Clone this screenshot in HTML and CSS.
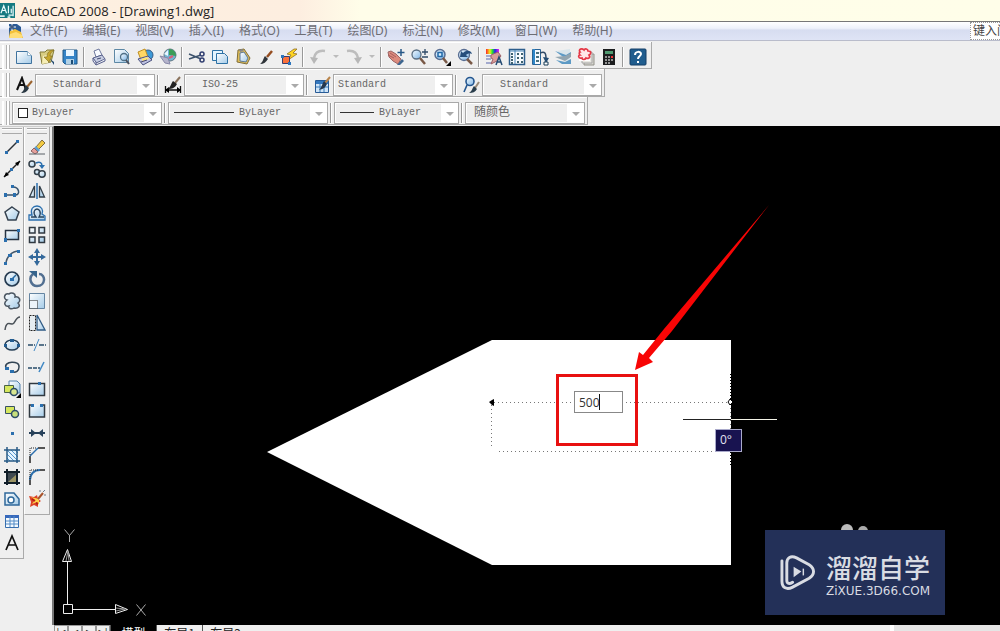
FILE: index.html
```html
<!DOCTYPE html>
<html lang="zh-CN">
<head>
<meta charset="utf-8">
<title>AutoCAD 2008 - [Drawing1.dwg]</title>
<link rel="stylesheet" href="styles.css">
</head>
<body>
<svg class="defs" aria-hidden="true">
  <defs>
    <linearGradient id="ice" x1="0" y1="0" x2="1" y2="1"><stop offset="0" stop-color="#fff"/><stop offset="1" stop-color="#a4cbe8"/></linearGradient>
    <linearGradient id="lens" x1="0" y1="0" x2="1" y2="1"><stop offset="0" stop-color="#f5fbff"/><stop offset="1" stop-color="#7fb6e6"/></linearGradient>
    <linearGradient id="rainbow"><stop offset="0" stop-color="#f22"/><stop offset=".3" stop-color="#ee2"/><stop offset=".5" stop-color="#2d3"/><stop offset=".7" stop-color="#22e"/><stop offset="1" stop-color="#e2e"/></linearGradient>
  </defs>
</svg>

<header class="titlebar">
  <svg class="app-icon" viewBox="0 0 16 16"><rect width="16" height="16" fill="#167a80"/><path d="m1 11 3-8 3 8M2 8h4M9 3v8M12 6v5M14 3v11M9 13h5" stroke="#eafafa" stroke-width="1.300" fill="none"/><path d="M0 14h5M8 15h3" stroke="#d5eeee" stroke-width="2"/></svg>
  <h1>AutoCAD 2008 - [Drawing1.dwg]</h1>
</header>

<nav class="menubar">
  <svg class="doc-icon" viewBox="0 0 16 16"><path d="M2 1h8l4 3v10H2z" fill="#2c5b96"/><path d="m3 8 5-2 6 3 2 6H2z" fill="#f3c13b"/><path d="m3 11 6-2 6 3v3H2z" fill="#ffdd77"/><path d="M5 0v8M1 4h8" stroke="#fff"/><path d="M5 2v4M3 4h4" stroke="#163460"/></svg>
  <button>文件(F)</button><button>编辑(E)</button><button>视图(V)</button><button>插入(I)</button><button>格式(O)</button><button>工具(T)</button><button>绘图(D)</button><button>标注(N)</button><button>修改(M)</button><button>窗口(W)</button><button>帮助(H)</button>
  <input class="ask" type="text" aria-label="键入问题" value="键入问题">
</nav>

<section class="toolbars">
  <div class="toolbar">
    <span class="grip"></span>
    <button class="tool" aria-label="新建"><svg viewBox="0 0 18 18"><path d="M1.500 3.500h11l4 4v8h-15z" fill="url(#ice)" stroke="#3f739f"/><path d="M12.500 3.500v4h4" fill="#fff" stroke="#8fb2cb"/></svg></button>
    <button class="tool" aria-label="打开"><svg viewBox="0 0 18 18"><path d="M2 4h5l2-2h7l-3 12-9 2z" fill="#d8cd83" stroke="#837b38"/><path d="m5 8 7-2-2 9-6 1z" fill="#f6eeb6"/><path d="M16 2c-5 0-7 3-7 7H6l5 5 3-6h-2c0-2 1-4 4-6z" fill="#c7a72d" stroke="#806b22" stroke-width=".6"/><path d="m12 11 4 3v3z" fill="#244c72"/></svg></button>
    <button class="tool" aria-label="保存"><svg viewBox="0 0 18 18"><path d="M2 2h14v14H4l-2-2z" fill="#3584c7" stroke="#205886"/><path d="M5 2h8v6H5z" fill="#e9f6ff"/><path d="M5 11h8v5H5z" fill="#b3d2e6"/><path d="M10 12h2v4h-2z" fill="#1d4c74"/></svg></button>
    <span class="sep"></span>
    <button class="tool" aria-label="打印"><svg viewBox="0 0 18 18"><path d="m4 3 5-2 3 6-6 2z" fill="#f7faff" stroke="#6f799d"/><path d="m3 10 9-3 3 4-9 4z" fill="#c6cde2" stroke="#58618c"/><path d="M3 10v3l3 4v-3zM6 17l9-4v-2" fill="#e9ecf5" stroke="#58618c"/><path d="m7 11 4-1" stroke="#424a72"/></svg></button>
    <button class="tool" aria-label="打印预览"><svg viewBox="0 0 18 18"><path d="M1.500 1.500h10l4 4v9h-14z" fill="url(#ice)" stroke="#5d88a5"/><circle cx="11" cy="9" r="3.500" fill="url(#lens)" stroke="#527187" stroke-width="1.300"/><path d="m13 12 3 4" stroke="#4d535f" stroke-width="2"/></svg></button>
    <button class="tool" aria-label="发布"><svg viewBox="0 0 18 18"><circle cx="12" cy="7" r="5" fill="#3e9ad7" stroke="#365d86"/><path d="m2 4 7-3 3 8-7 3z" fill="#ffd764" stroke="#be8e22"/><path d="m2 11 10-3 4 4-9 5z" fill="#bdc2e1" stroke="#4e5582"/><path d="m5 11 6-2 2 2-6 2z" fill="#ffe374"/><path d="m5 14 6-2" stroke="#49476b"/></svg></button>
    <button class="tool" aria-label="三维 DWF"><svg viewBox="0 0 18 18"><circle cx="11" cy="7" r="6" fill="#72b4d4" stroke="#617683"/><path d="M10 1c4 0 7 3 7 7l-7-1z" fill="#3a9d56"/><path d="M9 2 5 6l4 2z" fill="#e9f7ff"/><path d="m1 8 8 2 2 6-5-1z" fill="#b5b4cc" stroke="#8788a8"/><path d="m10 10 4-2" stroke="#d95e79" stroke-width="2"/></svg></button>
    <span class="sep"></span>
    <button class="tool" aria-label="剪切"><svg viewBox="0 0 18 18"><path d="m1 6 12 5M1 11l12-4" stroke="#3c526c" stroke-width="1.500"/><circle cx="14" cy="6" r="2" fill="none" stroke="#303e70" stroke-width="1.500"/><circle cx="14" cy="12" r="2" fill="none" stroke="#303e70" stroke-width="1.500"/></svg></button>
    <button class="tool" aria-label="复制"><svg viewBox="0 0 18 18"><path d="M1.500 2.500h10v10h-10z" fill="#e4f5ff" stroke="#2e72a5"/><path d="M5.500 5.500h8l3 3v7h-11z" fill="url(#ice)" stroke="#2e72a5"/></svg></button>
    <button class="tool" aria-label="粘贴"><svg viewBox="0 0 18 18"><path d="m4 2 6-1 6 9-3 6-10-2z" fill="#e2bf57" stroke="#806e39"/><path d="m6 5 4-1 4 6-2 4-6-1z" fill="url(#ice)" stroke="#5a7899"/><path d="m5 2 3-1 2 2-4 1z" fill="#86888b"/></svg></button>
    <button class="tool" aria-label="特性匹配"><svg viewBox="0 0 18 18"><path d="m10 9 5-6" stroke="#954d20" stroke-width="2.500"/><path d="m8 8 3 3c-2 3-4 5-8 5 3-2 3-5 5-8z" fill="#2f3439"/></svg></button>
    <button class="tool" aria-label="块编辑器"><svg viewBox="0 0 18 18"><path d="M14 1 7 6l4 1-3 5 9-6-4-1 4-4z" fill="#ffd522" stroke="#91702a" stroke-width=".8"/><path d="M2.500 8.500h7v7h-7z" fill="#fb713b" stroke="#393d6c"/><path d="M1 7h3v3H1zM8 14h3v3H8z" fill="#2c75bc"/></svg></button>
    <span class="sep"></span>
    <button class="tool" aria-label="放弃"><svg viewBox="0 0 18 18"><path d="M16 3C9 2 6 5 5 10" fill="none" stroke="#bdbdbd" stroke-width="2.500"/><path d="m1 9 8 1-4 6z" fill="#b7b7b7"/></svg></button>
    <button class="drop" aria-label="放弃列表"></button>
    <button class="tool" aria-label="重做"><svg viewBox="0 0 18 18"><path d="M2 3c7-1 10 2 11 7" fill="none" stroke="#bdbdbd" stroke-width="2.500"/><path d="m17 9-8 1 4 6z" fill="#b7b7b7"/></svg></button>
    <button class="drop" aria-label="重做列表"></button>
    <span class="sep"></span>
    <button class="tool" aria-label="平移"><svg viewBox="0 0 18 18"><path d="m1 4 3-1 5 3 5 5-3 5-5-3-4-4z" fill="#dc8b7d" stroke="#9c6667"/><path d="m1 7 6 3M3 5l6 4" stroke="#a75e5d"/><path d="m10 17 5-6 2 2-4 4z" fill="#3d658e"/><path d="M14 1v7M10.500 4.500h7" stroke="#285887" stroke-width="1.500"/></svg></button>
    <button class="tool" aria-label="实时缩放"><svg viewBox="0 0 18 18"><circle cx="6.500" cy="6.500" r="4.500" fill="url(#lens)" stroke="#596e82" stroke-width="1.300"/><path d="m10 10 5 6" stroke="#795947" stroke-width="2.500"/><path d="M12 4h6M15 1v6M12 9h6" stroke="#314b68" stroke-width="1.300"/></svg></button>
    <button class="tool" aria-label="窗口缩放"><svg viewBox="0 0 18 18"><circle cx="7" cy="6.500" r="5" fill="url(#lens)" stroke="#596e92" stroke-width="1.500"/><path d="M5 4.500h4v4H5z" fill="#d9efff" stroke="#2168a6" stroke-width="1.500"/><path d="m10 10 4 5" stroke="#795947" stroke-width="2.500"/><path d="M18 13v5h-5z"/></svg></button>
    <button class="tool" aria-label="缩放上一个"><svg viewBox="0 0 18 18"><circle cx="8" cy="7" r="5.500" fill="url(#lens)" stroke="#596e92" stroke-width="1.300"/><path d="m11 11 5 5" stroke="#795947" stroke-width="2.500"/><path d="m4 9 1-6 2 2c3-3 8-3 9 1-3-1-5 0-6 1l2 2z" fill="#254e7c"/></svg></button>
    <span class="sep"></span>
    <button class="tool" aria-label="特性"><svg viewBox="0 0 18 18"><path d="M1 1h13v5H1z" fill="url(#rainbow)"/><path d="M1 8h6M1 11h5M1 15h5" stroke="#8a94c4" stroke-width="1.500"/><path d="m6 7 7-3 3 4-4 5-6 3 2-5-2-1z" fill="#db9c98" stroke="#9b6269"/><path d="m11 17 3-8 3 8M12 14h4" fill="none" stroke="#244a72" stroke-width="1.500"/></svg></button>
    <button class="tool" aria-label="设计中心"><svg viewBox="0 0 18 18"><path d="M1.500 1.500h15v15h-15z" fill="#f9fcff" stroke="#2d5e8c" stroke-width="1.500"/><path d="M2 3h14M7 2v14" stroke="#4c88b9"/><path d="M3 6h2M3 9h2M3 12h2M3 15h2M9 6h2M13 6h2M9 10h2M13 10h2M9 14h2M13 14h2" stroke="#3e6271" stroke-width="2"/></svg></button>
    <button class="tool" aria-label="工具选项板"><svg viewBox="0 0 18 18"><path d="M1.500 1.500h8v15h-8z" fill="#f5faff" stroke="#2a6496"/><path d="M3 1v15" stroke="#2e87c9" stroke-width="2"/><path d="M5 5h3M5 9h3M5 13h3" stroke="#49717f" stroke-width="2"/><path d="M9 5c5-2 6 0 6 6" fill="none" stroke="#314b68" stroke-width="1.500"/><path d="m12 9 6 1-3 5z" fill="#234c73"/><path d="M13 14h4v3h-4z" fill="#fff" stroke="#173a55"/></svg></button>
    <button class="tool" aria-label="图纸集管理器"><svg viewBox="0 0 18 18"><path d="M3 3 16 1v11l-4 4z" fill="#d9e5eb"/><path d="m1 3 11 4 5-3v4l-5 3zM2 12l9 2 6-3v5H8z" fill="#5d9ac5"/><path d="m1 9 10-1 6-3v4l-6 4z" fill="#92a5b0"/></svg></button>
    <button class="tool" aria-label="标记集管理器"><svg viewBox="0 0 18 18"><path d="M7 6h10v11H7z" fill="#d6d5cf" stroke="#93928a"/><path d="M5 4h10v11H5z" fill="#e9e8e2" stroke="#a5a5a5"/><path d="M2 2h11v11H2z" fill="#fff"/><path d="M3 4c-2-3 2-4 4-2 1-2 4-1 4 1 4 0 3 3 1 4 2 3-1 4-3 3-1 2-4 2-4 0-4 1-4-3-2-3-1-1-1-3 0-3z" fill="#ffe8e8" stroke="#e53745" stroke-width="1.700"/></svg></button>
    <button class="tool" aria-label="快速计算器"><svg viewBox="0 0 18 18"><path d="M3 1h12v16H3z" fill="#1b1d1e"/><path d="M5 3h8v3H5z" fill="#4f9a70"/><path d="M5 9h2M8 9h2M11 9h2M5 12h2M8 12h2M11 12h2M5 15h2M8 15h2" stroke="#bbb" stroke-width="1.300"/><path d="M11 8h2v2h-2z" fill="#e33"/></svg></button>
    <span class="sep"></span>
    <button class="tool" aria-label="帮助"><svg viewBox="0 0 18 18"><rect x="1" y="1" width="16" height="16" rx="1" fill="#205d8e" stroke="#143f66"/><path d="M6 7c0-4 6-4 6-1 0 2-3 2-3 5M9 13v2" fill="none" stroke="#fff" stroke-width="2"/></svg></button>
  </div>

  <div class="toolbar">
    <span class="grip"></span>
    <button class="tool" aria-label="文字样式"><svg viewBox="0 0 18 18"><path d="m2 14 5-12 4 12M4 9h6" fill="none" stroke="#111" stroke-width="2"/><path d="m12 11 5-6" stroke="#9b632e" stroke-width="2"/><path d="m11 9 3 3c-2 4-4 5-8 5 3-2 3-5 5-8z" fill="#293742"/></svg></button>
    <label class="combo pad-wide"><select aria-label="文字样式"><option>Standard</option></select></label>
    <span class="sep"></span>
    <button class="tool" aria-label="标注样式"><svg viewBox="0 0 18 18"><path d="M1.500 10v7M16.500 10v7M2 14h14" stroke="#111" stroke-width="1.300"/><path d="m1 14 4-3v6zM17 14l-4-3v6z"/><path d="m11 7 5-6" stroke="#8a735d" stroke-width="2"/><path d="m9 5 4 3c-2 4-5 5-9 5 3-3 3-5 5-8z" fill="#222"/></svg></button>
    <label class="combo pad-wide"><select aria-label="标注样式"><option>ISO-25</option></select></label>
    <span class="sep"></span>
    <button class="tool" aria-label="表格样式"><svg viewBox="0 0 18 18"><path d="M2.500 4.500h13v12h-13z" fill="#cfe4f7" stroke="#285b96"/><path d="M3 5h12v3H3z" fill="#3478bf"/><path d="M3 11h12M7 5v11M11 5v11" stroke="#377bbb"/><path d="m12 7 5-6" stroke="#b9854c" stroke-width="2"/><path d="m11 5 3 3c-2 4-4 5-8 6 3-3 3-6 5-9z" fill="#26384e"/></svg></button>
    <label class="combo pad-slim"><select aria-label="表格样式"><option>Standard</option></select></label>
    <span class="sep"></span>
    <button class="tool" aria-label="多重引线样式"><svg viewBox="0 0 18 18"><circle cx="8" cy="5.500" r="4" fill="url(#lens)" stroke="#24568f" stroke-width="1.600"/><path d="m5 9-3 7" stroke="#24568f" stroke-width="1.600"/><path d="m13 12 4-6" stroke="#9a8b79" stroke-width="2"/><path d="m12 10 3 3c-2 3-4 4-8 4 3-2 3-4 5-7z" fill="#2a3e4c"/></svg></button>
    <label class="combo pad-wide"><select aria-label="多重引线样式"><option>Standard</option></select></label>
  </div>

  <div class="toolbar">
    <span class="grip"></span>
    <label class="combo color"><span class="swatch"></span><select aria-label="颜色"><option>ByLayer</option></select></label>
    <span class="sep"></span>
    <label class="combo linetype"><span class="rule long"></span><select aria-label="线型"><option>ByLayer</option></select></label>
    <span class="sep"></span>
    <label class="combo weight"><span class="rule"></span><select aria-label="线宽"><option>ByLayer</option></select></label>
    <span class="sep"></span>
    <label class="combo plot"><select aria-label="打印样式"><option>随颜色</option></select></label>
  </div>
</section>

<main class="workspace">
  <aside class="palettes">
    <div class="palette draw">
      <span class="vgrip"></span>
      <button aria-label="直线"><svg viewBox="0 0 18 18"><path d="M3 15 15 3" stroke="#2a3138" stroke-width="1.500"/><path d="M2 13h3v3H2zM13 2h3v3h-3z" fill="#2b6fae"/></svg></button>
      <button aria-label="构造线"><svg viewBox="0 0 18 18"><path d="M1 17 17 1" stroke="#222" stroke-width="1.500"/><path d="m1 17 2-5 3 3zM17 1l-5 2 3 3z"/><path d="M7 8h3v3H7z" fill="#2b6fae"/></svg></button>
      <button aria-label="多段线"><svg viewBox="0 0 18 18"><path d="M2 13h10c6 0 4-8-2-8" fill="none" stroke="#37536e" stroke-width="1.500"/><path d="M1 11h3v4H1zM10 11h3v4h-3zM8 3h3v3H8z" fill="#2b6fae"/></svg></button>
      <button aria-label="正多边形"><svg viewBox="0 0 18 18"><path d="m9 3 7 5-3 8H5L2 8z" fill="url(#ice)" stroke="#354250" stroke-width="1.500"/></svg></button>
      <button aria-label="矩形"><svg viewBox="0 0 18 18"><path d="M2.500 4.500h13v9h-13z" fill="url(#ice)" stroke="#263342" stroke-width="1.500"/><path d="M1 12h3v4H1zM14 3h3v3h-3z" fill="#2b6fae"/></svg></button>
      <button aria-label="圆弧"><svg viewBox="0 0 18 18"><path d="M3 16C3 9 9 3 16 3" fill="none" stroke="#44586c" stroke-width="1.500"/><path d="M1 14h3v3H1zM5 6h4v3H5zM14 2h3v3h-3z" fill="#2b6fae"/></svg></button>
      <button aria-label="圆"><svg viewBox="0 0 18 18"><circle cx="9" cy="9" r="7" fill="url(#ice)" stroke="#253b51" stroke-width="1.700"/><path d="m9 9 4-4" stroke="#25689d" stroke-width="1.500"/><path d="M7 8h4v3H7z" fill="#2b6fae"/></svg></button>
      <button aria-label="修订云线"><svg viewBox="0 0 18 18"><path d="M4 8C0 7 1 1 6 2c2-2 7-1 6 3 5-1 6 4 3 6 3 3 0 6-4 5-3 2-6 0-5-2-4 1-6-3-2-6z" fill="url(#ice)" stroke="#4a5561" stroke-width="1.500"/></svg></button>
      <button aria-label="样条曲线"><svg viewBox="0 0 18 18"><path d="M2 16c1-8 4-7 7-6s3-7 8-7" fill="none" stroke="#495057" stroke-width="1.500"/></svg></button>
      <button aria-label="椭圆"><svg viewBox="0 0 18 18"><ellipse cx="9" cy="9" rx="7" ry="5" fill="url(#ice)" stroke="#263f56" stroke-width="1.500"/><path d="M1 8h3v3H1zM14 8h3v3h-3zM7 3h4v3H7z" fill="#235d91"/></svg></button>
      <button aria-label="椭圆弧"><svg viewBox="0 0 18 18"><path d="M3 10C0 3 17 2 16 9c0 4-3 6-7 5" fill="none" stroke="#324454" stroke-width="1.500"/><path d="M2 9h4v3H2zM7 12h4v3H7z" fill="#2b6fae"/></svg></button>
      <button aria-label="插入块"><svg viewBox="0 0 18 18"><path d="M6 1h8l3 3v9H6z" fill="url(#ice)" stroke="#5582ad"/><path d="M1.500 5.500h9v7h-9z" fill="#d5e75d" stroke="#496146"/><circle cx="11" cy="12" r="3.500" fill="#d8e690" stroke="#2c4c67" stroke-width="1.500"/><path d="M18 13v5h-5z"/></svg></button>
      <button aria-label="创建块"><svg viewBox="0 0 18 18"><path d="M2.500 4.500h9v7h-9z" fill="#d5e75d" stroke="#385064"/><circle cx="12" cy="12" r="3.500" fill="#c7df7c" stroke="#2c4c67" stroke-width="1.500"/></svg></button>
      <button aria-label="点"><svg viewBox="0 0 18 18"><path d="M8 8h3v3H8z" fill="#2b6fae"/></svg></button>
      <button aria-label="图案填充"><svg viewBox="0 0 18 18"><path d="M4 4h11v11H4z" fill="#e5f4ff"/><path d="m4 4 11 11M4 8l7 7M4 12l3 3M8 4l7 7M12 4l3 3" stroke="#5795cc"/><path d="M4 1v16M14 1v16M1 4h16M1 15h16" stroke="#275985" stroke-width="1.500"/></svg></button>
      <button aria-label="渐变色"><svg viewBox="0 0 18 18"><path d="M4 4h11v11H4z" fill="#3f4a52"/><path d="m5 14 9-8v8z" fill="#9b9464"/><path d="M4 1v16M14 1v16M1 4h16M1 15h16" stroke="#111e29" stroke-width="2"/></svg></button>
      <button aria-label="面域"><svg viewBox="0 0 18 18"><path d="M2 3h9l5 6v6H2z" fill="url(#ice)" stroke="#2f689a" stroke-width="1.500"/><circle cx="8" cy="10" r="3" fill="#fff" stroke="#2f689a" stroke-width="1.500"/></svg></button>
      <button aria-label="表格"><svg viewBox="0 0 18 18"><path d="M2.500 3.500h13v12h-13z" fill="#f4faff" stroke="#366eae"/><path d="M2 3h14v3H2z" fill="#3769bc"/><path d="M3 9h12M3 12h12M7 4v11M11 4v11" stroke="#538bc6"/></svg></button>
      <button aria-label="多行文字"><svg viewBox="0 0 18 18"><path d="M3 16 9 2l6 14M5 11h8" fill="none" stroke="#111" stroke-width="1.700"/></svg></button>
    </div>
    <div class="palette modify">
      <span class="vgrip"></span>
      <button aria-label="删除"><svg viewBox="0 0 18 18"><path d="m8 9 6-7 3 3-7 7z" fill="#f3ca42" stroke="#7f6d40"/><path d="m5 11 3-3 4 4-3 3z" fill="#5c9fcf"/><path d="m3 13 3-3 4 4-3 2z" fill="#e5a09b" stroke="#8c6262"/><path d="M1 16h16" stroke="#5b6067"/></svg></button>
      <button aria-label="复制对象"><svg viewBox="0 0 18 18"><circle cx="4" cy="4" r="3" fill="url(#ice)" stroke="#333f49" stroke-width="1.500"/><circle cx="9" cy="12" r="2.500" fill="url(#ice)" stroke="#333f49" stroke-width="1.500"/><circle cx="14" cy="14" r="3.200" fill="url(#ice)" stroke="#333f49" stroke-width="1.500"/><path d="M8 3c4-2 6 0 6 3" fill="none" stroke="#2b6fae" stroke-width="1.500"/><path d="M11 5h6l-3 4z" fill="#2b6fae"/></svg></button>
      <button aria-label="镜像"><svg viewBox="0 0 18 18"><path d="M6.500 4v11h-5zM11.500 4v11h5z" fill="url(#ice)" stroke="#333f49" stroke-width="1.300"/><path d="M9 1v16" stroke="#2b6fae" stroke-width="1.500"/></svg></button>
      <button aria-label="偏移"><svg viewBox="0 0 18 18"><path d="M1 16v-5h3C2 5 5 2 9 2s7 4 5 8l3 2v4z" fill="url(#ice)" stroke="#2b6fae" stroke-width="1.300"/><path d="M3 13h5c-4-5-1-8 1-8s5 3 2 8h5" fill="none" stroke="#26415b" stroke-width="1.300"/></svg></button>
      <button aria-label="阵列"><svg viewBox="0 0 18 18"><path d="M1.500 1.500h5.500V7H1.500zM11 1.500h5.500V7H11zM1.500 11h5.500v5.500H1.500zM11 11h5.500v5.500H11z" fill="url(#ice)" stroke="#303941" stroke-width="1.500"/></svg></button>
      <button aria-label="移动"><svg viewBox="0 0 18 18"><path d="M9 3v12M3 9h12" stroke="#34699b" stroke-width="2"/><path d="M9 0 6 5h6zM9 18l3-5H6zM0 9l5-3v6zM18 9l-5 3V6z" fill="#34699b"/></svg></button>
      <button aria-label="旋转"><svg viewBox="0 0 18 18"><path d="M5 4C0 8 3 16 9 16c9 0 9-12 2-12" fill="none" stroke="#526f91" stroke-width="2.500"/><path d="M1 1h8v7z" fill="#36648c"/></svg></button>
      <button aria-label="缩放"><svg viewBox="0 0 18 18"><path d="M1.500 1.500h15v15h-15z" fill="url(#ice)" stroke="#6585a2"/><path d="M1.500 8.500h8v8h-8z" fill="#edf5fb" stroke="#222" stroke-dasharray="1 1"/></svg></button>
      <button aria-label="拉伸"><svg viewBox="0 0 18 18"><path d="M9 1v15h8z" fill="url(#ice)" stroke="#2f5b85" stroke-width="1.300"/><path d="M1.500 1.500h6v15h-6z" fill="#e6edf1" stroke="#222" stroke-dasharray="2 1"/></svg></button>
      <button aria-label="修剪"><svg viewBox="0 0 18 18"><path d="M0 9h7M11 9h7" stroke="#294c69" stroke-width="1.500" stroke-dasharray="5 1"/><path d="m6 15 5-12" stroke="#4289c4"/></svg></button>
      <button aria-label="延伸"><svg viewBox="0 0 18 18"><path d="M0 10h12" stroke="#294c69" stroke-width="1.500" stroke-dasharray="4 1"/><path d="m11 14 5-10" stroke="#4289c4" stroke-width="1.500"/></svg></button>
      <button aria-label="打断于点"><svg viewBox="0 0 18 18"><path d="M1.500 3.500h15v12h-15z" fill="url(#ice)" stroke="#303941" stroke-width="1.500"/><path d="M10 2h3v3h-3z" fill="#2b6fae"/></svg></button>
      <button aria-label="打断"><svg viewBox="0 0 18 18"><path d="M4 3H1.500v12h15V3H14" fill="url(#ice)" stroke="#303941" stroke-width="1.500"/><path d="M3 2h3v3H3zM12 2h3v3h-3z" fill="#2b6fae"/></svg></button>
      <button aria-label="合并"><svg viewBox="0 0 18 18"><path d="M1 9h16" stroke="#27415a" stroke-width="2"/><path d="m8 9-5-4v8zM10 9l5-4v8z" fill="#27415a"/></svg></button>
      <button aria-label="倒角"><svg viewBox="0 0 18 18"><path d="M2 17v-7M10 2h7" stroke="#222" stroke-width="1.500"/><path d="m2 10 8-8" stroke="#2b6fae" stroke-width="1.500"/><path d="M2 9V2h7" fill="none" stroke="#222" stroke-dasharray="1 1"/></svg></button>
      <button aria-label="圆角"><svg viewBox="0 0 18 18"><path d="M2 17v-5M12 2h5" stroke="#222" stroke-width="1.500"/><path d="M2 12C2 6 6 2 12 2" fill="none" stroke="#2b6fae" stroke-width="2"/><path d="M2 11V2h9" fill="none" stroke="#222" stroke-dasharray="1 1"/></svg></button>
      <button aria-label="分解"><svg viewBox="0 0 18 18"><path d="m1 6 5 1 3-2 1 4 3 2-3 2v4l-4-2-4 2 1-5z" fill="#dc4328"/><path d="m3 7 4 3-3 4 5-2 2 3V9z" fill="#ffd24a"/><path d="m4 9 3 2M8 13l2 1" stroke="#b61e17" stroke-width="2"/><path d="m10 9 5-6" stroke="#a8532b" stroke-width="2"/><path d="M12 2V0M16 5h2M15 2l2-2" stroke="#6a7a88"/></svg></button>
    </div>
  </aside>

  <section class="canvas">
    <svg class="drawing" viewBox="0 0 946 499" preserveAspectRatio="xMinYMin slice">
      <g transform="translate(-54 -126)">
        <path d="M267 452 492 340H731V565H492z" fill="#fff"/>
        <path d="M730.500 374v30M730.500 452v15" stroke="#000" stroke-dasharray="1 2"/>
        <g stroke="#777" stroke-dasharray="1 3" fill="none"><path d="M494 402.500H730M491.500 405v42M499 451.500H730M730.500 404v47"/></g>
        <path d="m489 402 3-2 2-1v7l-2-1z"/><path d="m730 399 3 3-3 3-2-3z" fill="#fff" stroke="#000"/>
        <path d="M683 419.500h48" stroke="#222"/><path d="M731 419.500h46" stroke="#f4f4e8"/>
        <path d="M557.500 375.500h79v69h-79z" fill="none" stroke="#e81010" stroke-width="3"/>
        <path d="m635 370 4-18 4 3 21-26 105-124-97 126-23 27 4 4z" fill="#f80505"/>
        <g fill="none" stroke="#eee"><path d="M63.500 604.500h9v9h-9zM67.500 604v-42M73 609.500h42M67.500 549.500l4 12h-9zM127.500 609.500l-12 4v-9z"/><path d="m66 561 2-10 1 10M116 608l9 1-9 2" stroke="#999"/><path d="m64.500 529.500 5 6 5-6M69.500 535v7M136.500 604.500l9 11M145.500 604.500l-9 11" stroke="#aaa"/></g>
        <circle cx="847" cy="530" r="6" fill="#bbb"/><circle cx="863" cy="531" r="5" fill="#aaa"/>
      </g>
    </svg>
    <input class="length" type="text" value="500" aria-label="长度"><span class="cursor"></span>
    <output class="angle">0°</output>
    <div class="watermark">
      <svg viewBox="0 0 36 38"><path d="M2 7v21c0 7 5 9 11 6l17-9c6-4 6-10 0-14L17 4C11 1 7 4 7 9v18c0 4 3 4 6 2" fill="none" stroke="#d9dce3" stroke-width="3" stroke-linecap="round"/><path d="m14 13 8 5-8 6z" fill="#d9dce3"/><path d="M24 15v7" stroke="#d9dce3" stroke-width="1.500"/></svg>
      <div class="brand"><strong>溜溜自学</strong><span>ZiXUE.3D66.COM</span></div>
    </div>
  </section>
</main>

<footer class="tabs">
  <button class="nav">|◀</button><button class="nav">◀</button><button class="nav">▶</button><button class="nav">▶|</button>
  <button class="tab active">模型</button><button class="tab">布局1</button><button class="tab">布局2</button>
  <span class="scroll"></span>
</footer>
</body>
</html>
```

FILE: styles.css
```css
* { box-sizing: border-box; }
body {
  margin: 0;
  height: 100vh;
  overflow: hidden;
  display: flex;
  flex-direction: column;
  background: #efefef;
  color: #555;
  font: 12px/18px "Liberation Sans", "Noto Sans CJK SC", sans-serif;
}
button, input, select {
  margin: 0;
  padding: 0;
  border: 0;
  border-radius: 0;
  background: none;
  color: inherit;
  font: inherit;
}
svg { display: block; }
.defs { position: absolute; width: 0; height: 0; }

.titlebar {
  flex: none;
  display: flex;
  align-items: center;
  gap: 6px;
  height: 22px;
  border-bottom: 1px solid #777;
  background: linear-gradient(90deg, #fdf0e0, #fdeee0 30%, #fffde9 36%, #fffee9);
}
.app-icon { width: 15px; height: 15px; }
.titlebar h1 {
  margin: 0;
  color: #222;
  font: 13px/20px "Open Sans", sans-serif;
}

.menubar {
  flex: none;
  display: flex;
  align-items: center;
  gap: 15px;
  height: 19px;
  padding-left: 7px;
  border-bottom: 1px solid #b9bccb;
  background: linear-gradient(#fff, #eef1fa 35%, #d7ddf0 45%, #dfe4f5);
  color: #6d6d74;
  font: 12px/18px "Noto Sans", "Noto Sans CJK SC", sans-serif;
}
.menubar button { white-space: nowrap; }
.doc-icon { width: 16px; height: 16px; margin-right: -8px; }
.ask {
  width: 30px;
  height: 18px;
  margin-left: auto;
  padding-left: 2px;
  border: 1px dotted #999;
  border-right: 0;
  background: #fff;
  color: #444;
}

.toolbars {
  flex: none;
  display: flex;
  flex-direction: column;
  align-items: flex-start;
  padding: 1px 0;
}
.toolbar {
  display: flex;
  align-items: center;
  height: 27px;
  padding: 3px 2px 0 0;
  border-right: 1px solid #aaa;
  border-bottom: 1px solid #aaa;
  box-shadow: inset 0 1px #fff;
}
.toolbar + .toolbar { height: 28px; padding-top: 4px; }
.grip {
  width: 8px;
  height: 24px;
  margin: 0 2px;
  border-right: 1px solid #b2b2b2;
  background: linear-gradient(90deg, #fff 2px, #efefef 2px 4px, #b2b2b2 4px 5px, #fff 5px);
}
.tool {
  display: grid;
  place-items: center;
  width: 23px;
  height: 24px;
}
.tool svg { width: 18px; height: 18px; }
.sep {
  width: 6px;
  height: 20px;
  background: linear-gradient(90deg, transparent 2px, #999 2px 3px, #fff 3px 4px, transparent 4px);
}
.drop { width: 13px; height: 24px; }
.drop::before {
  content: "";
  display: block;
  margin: 0 auto;
  width: 0;
  border: solid transparent;
  border-width: 3px 3px 0;
  border-top-color: #bbb;
}

.combo {
  position: relative;
  display: flex;
  align-items: center;
  width: 120px;
  height: 22px;
  padding-left: 8px;
  border: 1px solid #a9a9a9;
  background: linear-gradient(270deg, #fff 17px, #efefef 17px);
  box-shadow: inset 0 0 0 1px #fff;
  color: #666;
  font: 10px/18px "Liberation Mono", "Noto Sans CJK SC", monospace;
}
.combo select {
  flex: 1;
  min-width: 0;
  height: 18px;
  appearance: none;
}
.combo::after {
  content: "";
  position: absolute;
  right: 4px;
  top: 9px;
  border: solid transparent;
  border-width: 4px 4px 0;
  border-top-color: #aaa;
  pointer-events: none;
}
.pad-wide { padding-left: 17px; }
.pad-slim { padding-left: 4px; }
.color { width: 150px; padding-left: 5px; gap: 4px; }
.linetype { width: 160px; padding-left: 5px; gap: 5px; }
.weight { width: 125px; padding-left: 5px; gap: 5px; }
.plot { font-size: 12px; }
.swatch { width: 10px; height: 10px; border: 1px solid #222; background: #fff; }
.rule { width: 34px; height: 1px; background: #333; }
.rule.long { width: 60px; }

.workspace { flex: 1; display: flex; min-height: 0; }
.palettes {
  flex: none;
  display: flex;
  align-items: flex-start;
  width: 54px;
  border-top: 1px solid #ccc;
  border-right: 2px solid #777;
}
.palette {
  display: flex;
  flex-direction: column;
  align-items: center;
  padding: 1px 0 4px;
  border-right: 1px solid #aaa;
  border-bottom: 1px solid #aaa;
}
.palette.draw { width: 24px; }
.palette.modify { width: 26px; border-left: 1px solid #fff; }
.vgrip {
  width: 20px;
  height: 6px;
  margin-bottom: 2px;
  border: solid #aaa;
  border-width: 1px 0;
  background: linear-gradient(#fff 1px, #efefef 1px);
}
.palette button {
  display: grid;
  place-items: center;
  width: 22px;
  height: 22px;
}
.palette svg { width: 18px; height: 18px; }

.canvas {
  position: relative;
  flex: 1;
  min-width: 0;
  overflow: hidden;
  background: #000;
}
.drawing { width: 100%; height: 100%; }
.length {
  position: absolute;
  left: 520px;
  top: 265px;
  width: 49px;
  height: 22px;
  padding-left: 4px;
  border: 1px solid #888;
  background: #fff;
  color: #333;
  font: 12px/20px "Open Sans", sans-serif;
}
.cursor {
  position: absolute;
  left: 545px;
  top: 268px;
  width: 1px;
  height: 16px;
  background: #111;
}
.angle {
  position: absolute;
  left: 661px;
  top: 303px;
  width: 27px;
  height: 23px;
  padding-left: 4px;
  border: 1px solid #aaaacb;
  background: #181350;
  color: #e3e3f0;
  font: 12px/20px "Open Sans", sans-serif;
}
.watermark {
  position: absolute;
  right: 55px;
  bottom: 10px;
  display: flex;
  align-items: center;
  gap: 11px;
  width: 180px;
  height: 85px;
  padding-left: 15px;
  background: #233058;
  color: #d9dce3;
}
.watermark svg { width: 35px; height: 37px; }
.brand { display: flex; flex-direction: column; }
.brand strong { font: 500 26px/36px "Noto Sans CJK SC", sans-serif; }
.brand span { font: 12px/12px "DejaVu Sans", sans-serif; }

.tabs {
  flex: none;
  display: flex;
  align-items: flex-start;
  height: 6px;
  padding-left: 54px;
  overflow: hidden;
  background: #efefef;
  color: #222;
}
.nav {
  width: 14px;
  height: 16px;
  border: 1px solid #999;
  font: 8px/10px "DejaVu Sans", sans-serif;
}
.tab {
  width: 46px;
  height: 16px;
  border-left: 1px solid #555;
  font: 12px/14px "Noto Sans CJK SC", sans-serif;
}
.tab.active { background: #000; color: #fff; }
.scroll {
  width: 110px;
  height: 6px;
  margin-left: auto;
  border-left: 4px solid #fff;
  background: #e5e5e5;
}
```
